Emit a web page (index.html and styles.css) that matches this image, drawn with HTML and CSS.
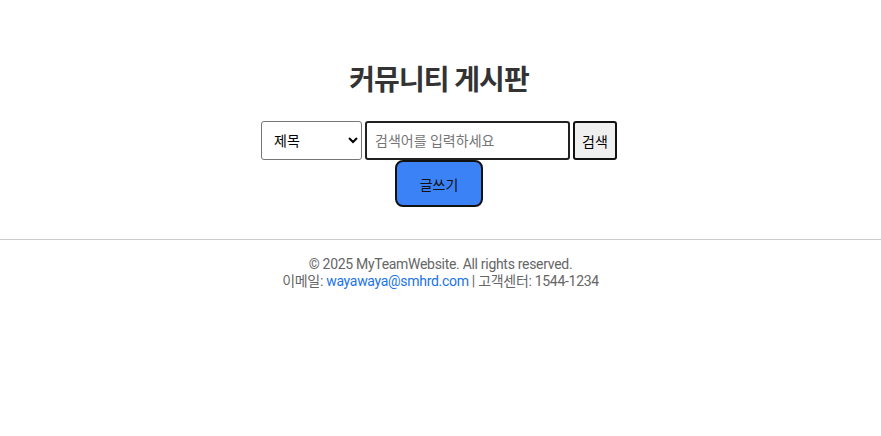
FILE: index.html
```html
<!DOCTYPE html>
<html lang="ko">
<head>
<meta charset="utf-8">
<link rel="stylesheet" href="styles.css">
</head>
<body>
<main class="board">
  <h1 class="title">커뮤니티 게시판</h1>
  <form class="search">
    <select class="search-type">
      <option>제목</option>
    </select>
    <input class="search-input" type="text" placeholder="검색어를 입력하세요">
    <button class="search-btn" type="button">검색</button>
  </form>
  <button class="write-btn" type="button">글쓰기</button>
</main>
<footer class="footer">
  <p>© 2025 MyTeamWebsite. All rights reserved.</p>
  <p>이메일: <a href="#">wayawaya@smhrd.com</a> | 고객센터: 1544-1234</p>
</footer>
</body>
</html>
```
FILE: styles.css
```css
body {
  margin: 0;
  font-family: Roboto, "Noto Sans CJK KR", sans-serif;
  color: #333;
  background: #fff;
}
.board {
  display: flex;
  flex-direction: column;
  align-items: center;
  padding: 61px 3px 32px 0;
}
.title {
  margin: 0 0 20px;
  font-size: 28px;
  font-weight: 700;
  color: #333;
  letter-spacing: -1px;
  line-height: 40px;
}
.search {
  display: flex;
  gap: 3px;
  align-items: stretch;
}
.search-type {
  width: 101px;
  height: 39px;
  padding: 0 8px;
  font-size: 14px;
  font-family: inherit;
  border: 1px solid #767676;
  border-radius: 3px;
  background: #fff;
  color: #000;
}
.search-input {
  width: 205px;
  height: 39px;
  box-sizing: border-box;
  padding: 0 8px;
  font-size: 14px;
  font-family: inherit;
  border: 2px solid #222;
  border-radius: 3px;
}
.search-input::placeholder {
  color: #757575;
}
.search-btn {
  width: 44px;
  height: 39px;
  padding: 0;
  font-size: 14px;
  font-family: inherit;
  background: #efefef;
  border: 2px solid #111;
  border-radius: 3px;
  color: #000;
}
.write-btn {
  width: 88px;
  height: 47px;
  font-size: 14px;
  font-family: inherit;
  background: #3b82f6;
  color: #111;
  border: 2px solid #111;
  border-radius: 8px;
}
.footer {
  border-top: 1px solid #ccc;
  padding-top: 16px;
  text-align: center;
  color: #666;
  font-size: 14px;
  line-height: 17px;
  letter-spacing: -0.3px;
}
.footer p {
  margin: 0;
}
.footer a {
  color: #1a73e8;
  text-decoration: none;
}
```
